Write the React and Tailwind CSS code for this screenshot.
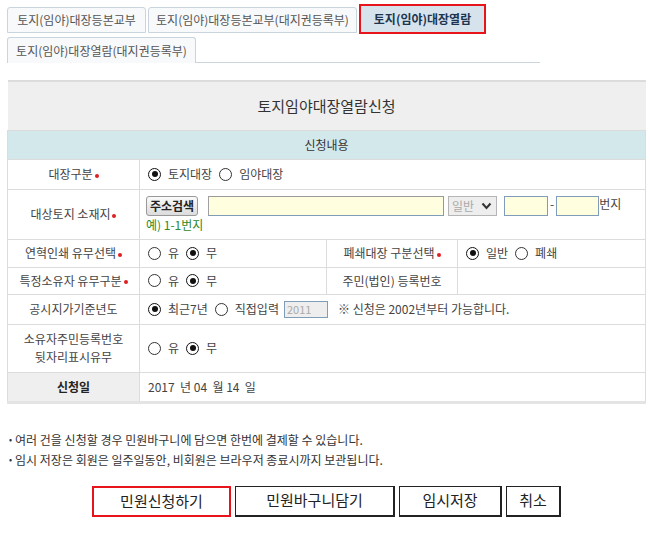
import React from "react";

const Radio = ({ checked }) => (
  <span
    className={
      "inline-flex h-[13px] w-[13px] shrink-0 items-center justify-center rounded-full bg-white " +
      (checked ? "border-[1.5px] border-[#111]" : "border border-[#333]")
    }
  >
    {checked && <span className="h-[6px] w-[6px] rounded-full bg-[#111]" />}
  </span>
);

const RadioGroup = ({ items }) => (
  <div className="flex items-center gap-[6px]">
    {items.map((item, i) => (
      <label key={i} className="flex items-center gap-[7px] pr-[1px]">
        <Radio checked={item.checked} />
        <span>{item.label}</span>
      </label>
    ))}
  </div>
);

const Req = () => (
  <span className="ml-[2px] inline-block h-[4px] w-[4px] rounded-full bg-[#e02020] align-middle" />
);

const Tab = ({ children, className = "" }) => (
  <div
    className={
      "flex h-[26px] items-center justify-center rounded-t-[3px] border border-[#c9d4dd] bg-[#f8f9fa] text-[12px] text-[#555] " +
      className
    }
  >
    {children}
  </div>
);

const labelCell = "border border-[#dcdcdc] bg-white text-center align-middle text-[12px] text-[#444]";
const valueCell = "border border-[#dcdcdc] bg-white pl-[8px] align-middle text-[12px] text-[#444]";

export default function App() {
  return (
    <div className="h-[538px] w-[650px] bg-white font-['Noto_Sans_CJK_KR','Noto_Sans',sans-serif] text-[#333]">
      {/* tabs */}
      <div className="pl-[7px] pt-[4px]">
        <div className="flex items-end gap-[2px]">
          <Tab className="mb-[1px] w-[139px]">토지(임야)대장등본교부</Tab>
          <Tab className="mb-[1px] w-[209px]">토지(임야)대장등본교부(대지권등록부)</Tab>
          <div className="h-[30px] w-[127px] border-2 border-[#e8141c] bg-[#d6e3ec]">
            <div className="flex h-full items-center justify-center text-[12px] font-bold text-[#1d3550]">
              토지(임야)대장열람
            </div>
          </div>
        </div>
        <div className="mt-[3px] w-[533px] border-b border-[#c9d4dd]">
          <Tab className="-mb-[1px] w-[189px] border-b-0">토지(임야)대장열람(대지권등록부)</Tab>
        </div>
      </div>

      {/* form table */}
      <table className="ml-[7px] mt-[17px] w-[639px] table-fixed border-collapse border-b-[3px] border-b-[#e4e4e4]">
        <colgroup>
          <col className="w-[132px]" />
          <col className="w-[187px]" />
          <col className="w-[131px]" />
          <col />
        </colgroup>
        <tbody>
          <tr className="h-[49px]">
            <td colSpan={4} className="border-t-2 border-[#dcdcdc] bg-[#efefef] text-center text-[15px] text-[#333]">
              토지임야대장열람신청
            </td>
          </tr>
          <tr className="h-[29px]">
            <td colSpan={4} className="border border-[#dcdcdc] bg-[#d3e8eb] text-center text-[12px] text-[#333]">
              신청내용
            </td>
          </tr>
          <tr className="h-[30px]">
            <td className={labelCell}>
              대장구분<Req />
            </td>
            <td colSpan={3} className={valueCell}>
              <RadioGroup items={[{ label: "토지대장", checked: true }, { label: "임야대장" }]} />
            </td>
          </tr>
          <tr className="h-[50px]">
            <td className={labelCell}>
              대상토지 소재지<Req />
            </td>
            <td colSpan={3} className="border border-[#dcdcdc] bg-white pl-[6px] align-middle text-[12px] text-[#444]">
              <div className="flex items-start">
                <button
                  type="button"
                  className="h-[20px] w-[52px] rounded-[3px] border border-[#999] bg-gradient-to-b from-[#fafafa] to-[#dcdcdc] text-[12px] font-bold leading-none text-[#222]"
                >
                  주소검색
                </button>
                <div className="ml-[10px] h-[20px] w-[236px] border border-[#7f9db9] border-t-[#9a9a9a] border-l-[#a0a0a0] bg-[#ffffe0]" />
                <div className="ml-[4px] flex h-[20px] w-[49px] items-center justify-between border border-[#b5b5b5] bg-[#eeeeee] pl-[3px] pr-[4px] text-[12px] text-[#aaa]">
                  <span>일반</span>
                  <svg width="11" height="8" viewBox="0 0 11 8">
                    <path d="M1.5 1.5 L5.5 6 L9.5 1.5" fill="none" stroke="#333" strokeWidth="2" />
                  </svg>
                </div>
                <div className="ml-[7px] h-[20px] w-[44px] border border-[#7f9db9] bg-[#ffffe0]" />
                <span className="mx-[2px] leading-[16px]">-</span>
                <div className="h-[20px] w-[43px] border border-[#7f9db9] bg-[#ffffe0]" />
                <span className="leading-[16px]">번지</span>
              </div>
              <div className="mt-[1px] text-[12px] leading-[16px] text-[#2b8a2b]">예) 1-1번지</div>
            </td>
          </tr>
          <tr className="h-[28px]">
            <td className={labelCell}>
              연혁인쇄 유무선택<Req />
            </td>
            <td className={valueCell}>
              <RadioGroup items={[{ label: "유" }, { label: "무", checked: true }]} />
            </td>
            <td className={labelCell}>
              폐쇄대장 구분선택<Req />
            </td>
            <td className={valueCell}>
              <RadioGroup items={[{ label: "일반", checked: true }, { label: "폐쇄" }]} />
            </td>
          </tr>
          <tr className="h-[27px]">
            <td className={labelCell}>
              특정소유자 유무구분<Req />
            </td>
            <td className={valueCell}>
              <RadioGroup items={[{ label: "유" }, { label: "무", checked: true }]} />
            </td>
            <td className={labelCell}>주민(법인) 등록번호</td>
            <td className={valueCell}></td>
          </tr>
          <tr className="h-[30px]">
            <td className={labelCell}>공시지가기준년도</td>
            <td colSpan={3} className={valueCell}>
              <div className="flex items-center">
                <RadioGroup items={[{ label: "최근7년", checked: true }, { label: "직접입력" }]} />
                <div className="ml-[4px] flex h-[17px] w-[44px] items-center border border-[#7f9db9] bg-[#eeeeee] pl-[2px] text-[11px] text-[#aaa]">
                  2011
                </div>
                <span className="ml-[10px]">※ 신청은 2002년부터 가능합니다.</span>
              </div>
            </td>
          </tr>
          <tr className="h-[48px]">
            <td className={labelCell + " leading-[18px]"}>
              소유자주민등록번호
              <br />
              뒷자리표시유무
            </td>
            <td colSpan={3} className={valueCell}>
              <RadioGroup items={[{ label: "유" }, { label: "무", checked: true }]} />
            </td>
          </tr>
          <tr className="h-[30px]">
            <td className="border border-[#dcdcdc] bg-[#efefef] text-center text-[12px] font-bold text-[#222]">신청일</td>
            <td colSpan={3} className={valueCell + " pl-[5px]"}>
              2017 &nbsp;년 04 &nbsp;월 14 &nbsp;일
            </td>
          </tr>
        </tbody>
      </table>

      {/* notes */}
      <ul className="ml-[9px] mt-[28px] space-y-[4px] text-[12px] leading-[16px] text-[#333]">
        <li className="flex items-center gap-[3px]">
          <span className="text-[9px] text-[#1d3550]">•</span>
          여러 건을 신청할 경우 민원바구니에 담으면 한번에 결제할 수 있습니다.
        </li>
        <li className="flex items-center gap-[3px]">
          <span className="text-[9px] text-[#1d3550]">•</span>
          임시 저장은 회원은 일주일동안, 비회원은 브라우저 종료시까지 보관됩니다.
        </li>
      </ul>

      {/* buttons */}
      <div className="ml-[92px] mt-[18px] flex gap-[4px]">
        <button type="button" className="h-[31px] w-[139px] border-2 border-[#e8141c] bg-white text-[15px] text-[#222]">
          민원신청하기
        </button>
        <button type="button" className="h-[31px] w-[160px] border border-[#222] border-b-2 border-r-2 bg-white text-[15px] text-[#222]">
          민원바구니담기
        </button>
        <button type="button" className="h-[31px] w-[103px] border border-[#222] border-b-2 border-r-2 bg-white text-[15px] text-[#222]">
          임시저장
        </button>
        <button type="button" className="h-[31px] w-[55px] border border-[#222] border-b-2 border-r-2 bg-white text-[15px] text-[#222]">
          취소
        </button>
      </div>
    </div>
  );
}
